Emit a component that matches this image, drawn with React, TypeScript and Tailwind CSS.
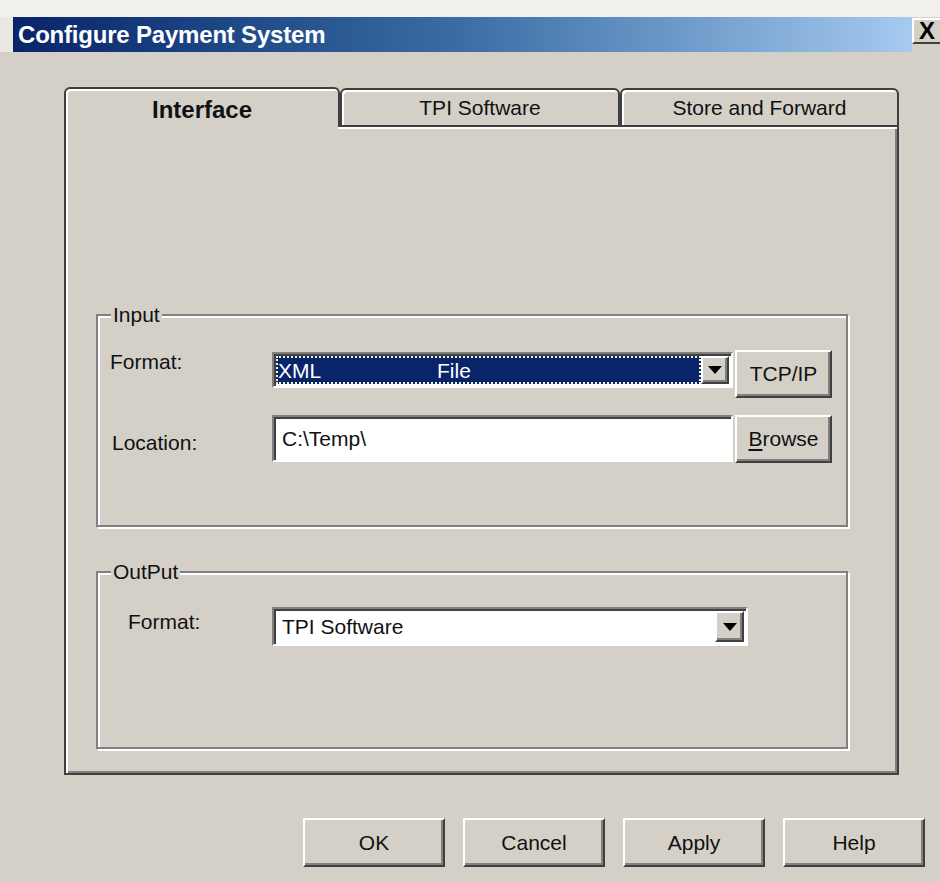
import React from 'react';

// classic 3D edges
const raised =
  'bg-[#d4d0c8] border-2 border-t-white border-l-white border-r-[#404040] border-b-[#404040] shadow-[inset_-2px_-2px_0_#808080]';
const sunken =
  'border-2 border-t-[#808080] border-l-[#808080] border-r-white border-b-white shadow-[inset_2px_2px_0_#404040]';
const groupBox =
  'border-2 border-[#808080] shadow-[inset_2px_2px_0_#fff,2px_2px_0_#fff]';

function DropArrow({ width }: { width: string }) {
  return (
    <div className={`${raised} ${width} flex items-center justify-center`}>
      <svg width="14" height="8" viewBox="0 0 14 8">
        <path d="M0 0 H14 L7 8 Z" fill="#000" />
      </svg>
    </div>
  );
}

function PushButton({ label, className }: { label: React.ReactNode; className: string }) {
  return (
    <button className={`${raised} ${className} flex items-center justify-center text-[21px] text-[#111]`}>
      {label}
    </button>
  );
}

export default function App() {
  return (
    <div
      className="w-[940px] h-[882px] overflow-hidden bg-[#d4d0c8] text-[#111]"
      style={{ fontFamily: '"Liberation Sans", Arial, sans-serif' }}
    >
      {/* window frame + caption */}
      <div className="h-[17px] bg-[#f1f0ed]" />
      <div className="flex h-[35px]">
        <div className="w-[13px] bg-[#ebe8e1]" />
        <div className="flex-1 flex items-center pl-[5px] bg-gradient-to-r from-[#0a246a] via-[#3a6ea5] to-[#a6caf0]">
          <span className="text-white font-bold text-[24px] leading-none tracking-[-0.2px]">
            Configure Payment System
          </span>
        </div>
        <div className="w-[28px] bg-[#d4d0c8]">
          <div className="h-[26px] mt-[1px] bg-[#d4d0c8] border-t-2 border-l-2 border-white border-b-2 border-b-[#404040] flex items-center justify-center text-[24px] font-bold leading-none text-black">
            X
          </div>
        </div>
      </div>

      {/* tab strip */}
      <div className="pt-[35px] pl-[64px]">
        <div className="flex items-end h-[40px]">
          <div className="w-[276px] h-[40px] border-2 border-b-0 border-[#404040] rounded-t-[6px] shadow-[inset_2px_2px_0_#fff] flex items-center justify-center pt-[4px] font-bold text-[24px]">
            Interface
          </div>
          <div className="w-[280px] h-[39px] border-2 border-[#404040] rounded-t-[6px] shadow-[inset_2px_2px_0_#fff] flex items-center justify-center pt-[1px] text-[21px]">
            TPI Software
          </div>
          <div className="w-[279px] h-[39px] border-2 border-[#404040] rounded-t-[6px] shadow-[inset_2px_2px_0_#fff] flex items-center justify-center pt-[1px] text-[21px]">
            Store and Forward
          </div>
        </div>

        {/* tab page */}
        <div className="w-[835px] border-2 border-t-0 border-[#404040] shadow-[inset_2px_0_0_#fff,inset_-2px_-2px_0_#808080] pb-[24px]">
          <div className="flex h-[2px]">
            <div className="w-[272px] bg-[#d4d0c8] shadow-[inset_2px_0_0_#fff]" />
            <div className="flex-1 bg-white" />
          </div>

          <fieldset className={`${groupBox} ml-[30px] mt-[174px] w-[752px] pl-[12px] pb-[62px]`}>
            <legend className="ml-[1px] px-[2px] bg-[#d4d0c8] text-[21px] leading-[24px]">Input</legend>

            <div className="flex items-start mt-[23px] h-[48px]">
              <div className="w-[162px] text-[21px] leading-[24px]">Format:</div>
              <div className={`${sunken} mt-[2px] w-[461px] h-[36px] bg-white flex p-[2px]`}>
                <div className="flex-1 bg-[#0a246a] border-2 border-dotted border-[#f3f0dc] flex items-center text-white text-[21px] leading-none">
                  <span className="w-[159px]">XML</span>
                  <span>File</span>
                </div>
                <DropArrow width="w-[28px]" />
              </div>
              <PushButton label="TCP/IP" className="ml-[2px] w-[97px] h-[48px]" />
            </div>

            <div className="flex items-start mt-[17px] h-[48px]">
              <div className="ml-[2px] mt-[16px] w-[160px] text-[21px] leading-[24px]">Location:</div>
              <div className={`${sunken} w-[461px] h-[47px] bg-white flex items-center pl-[8px] text-[21px]`}>
                C:\Temp\
              </div>
              <PushButton
                label={
                  <span>
                    <span className="underline underline-offset-[3px]">B</span>rowse
                  </span>
                }
                className="ml-[2px] w-[97px] h-[48px]"
              />
            </div>
          </fieldset>

          <fieldset className={`${groupBox} ml-[30px] mt-[33px] w-[752px] pl-[30px] pb-[101px]`}>
            <legend className="ml-[-17px] px-[2px] bg-[#d4d0c8] text-[21px] leading-[24px]">OutPut</legend>

            <div className="flex items-start mt-[23px]">
              <div className="mt-[3px] w-[144px] text-[21px] leading-[24px]">Format:</div>
              <div className={`${sunken} w-[476px] h-[39px] bg-white flex p-[2px]`}>
                <div className="flex-1 flex items-center pl-[6px] text-[21px]">TPI Software</div>
                <DropArrow width="w-[29px]" />
              </div>
            </div>
          </fieldset>
        </div>
      </div>

      {/* dialog buttons */}
      <div className="flex justify-end gap-[18px] pr-[15px] mt-[43px]">
        <PushButton label="OK" className="w-[142px] h-[49px]" />
        <PushButton label="Cancel" className="w-[142px] h-[49px]" />
        <PushButton label="Apply" className="w-[142px] h-[49px]" />
        <PushButton label="Help" className="w-[142px] h-[49px]" />
      </div>
    </div>
  );
}
